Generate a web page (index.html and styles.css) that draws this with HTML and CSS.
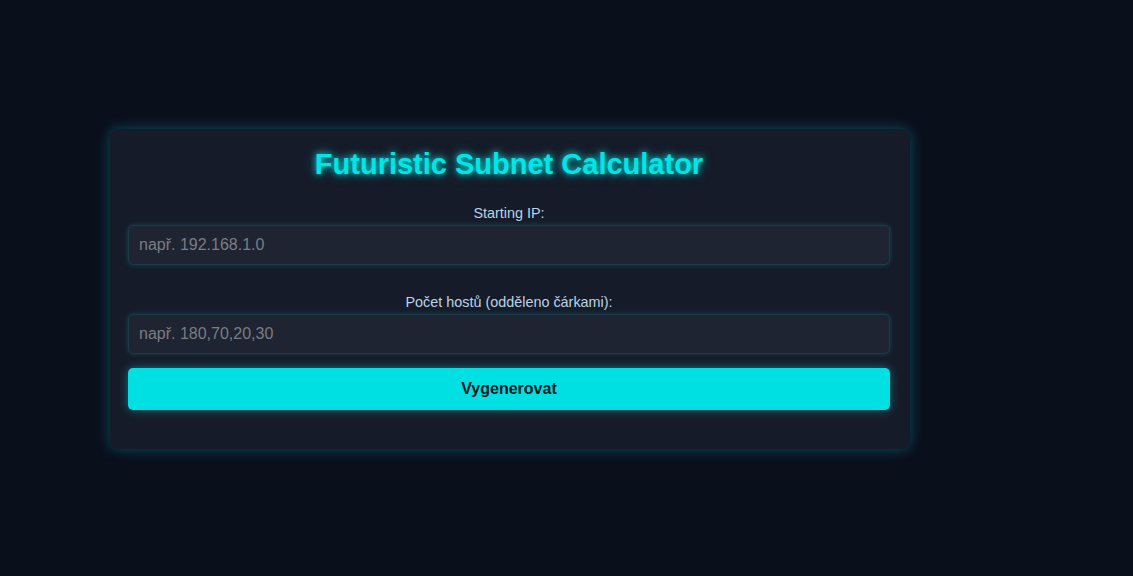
FILE: index.html
```html
<!DOCTYPE html>
<html lang="cs">
<head>
<meta charset="utf-8">
<title>Futuristic Subnet Calculator</title>
<link rel="stylesheet" href="styles.css">
</head>
<body>
<main class="card">
  <h1 class="title">Futuristic Subnet Calculator</h1>
  <label class="label" for="ip">Starting IP:</label>
  <input class="field" id="ip" type="text" placeholder="např. 192.168.1.0">
  <label class="label label-second" for="hosts">Počet hostů (odděleno čárkami):</label>
  <input class="field" id="hosts" type="text" placeholder="např. 180,70,20,30">
  <button class="btn" type="button">Vygenerovat</button>
</main>
</body>
</html>
```
FILE: styles.css
```css
html, body {
  margin: 0;
  padding: 0;
}
body {
  background: #0a0f1c;
  font-family: "Liberation Sans", Arial, sans-serif;
  height: 576px;
  overflow: hidden;
}
.card {
  box-sizing: border-box;
  width: 800px;
  margin: 129px 0 0 110px;
  padding: 19px 20px 39px 18px;
  background: #161b29;
  border-radius: 9px;
  box-shadow: 0 0 14px rgba(0, 200, 220, 0.35);
  display: flex;
  flex-direction: column;
}
.title {
  margin: 0;
  text-align: center;
  font-size: 29px;
  line-height: 33px;
  font-weight: bold;
  color: #00e6e6;
  text-shadow: 0 0 6px rgba(0, 230, 230, 0.9), 0 0 12px rgba(0, 230, 230, 0.5);
}
.label {
  display: block;
  margin: 24px 0 4px;
  text-align: center;
  font-size: 14.4px;
  line-height: 16px;
  color: #b9d3e6;
}
.label-second {
  margin-top: 29px;
}
.field {
  box-sizing: border-box;
  width: 100%;
  height: 40px;
  padding: 0 10px;
  background: #1f2432;
  border: 1px solid #1d3a46;
  border-radius: 5px;
  box-shadow: 0 0 5px rgba(0, 200, 220, 0.25);
  color: #d0d8e0;
  font-family: "Liberation Sans", Arial, sans-serif;
  font-size: 16px;
  outline: none;
}
.field::placeholder {
  color: #7a7d83;
}
.btn {
  margin-top: 14px;
  height: 42px;
  border: none;
  border-radius: 5px;
  background: #00e0e2;
  color: #0e1420;
  font-family: "Liberation Sans", Arial, sans-serif;
  font-size: 16px;
  font-weight: bold;
  box-shadow: 0 0 10px rgba(0, 224, 226, 0.45);
  cursor: pointer;
}
```
